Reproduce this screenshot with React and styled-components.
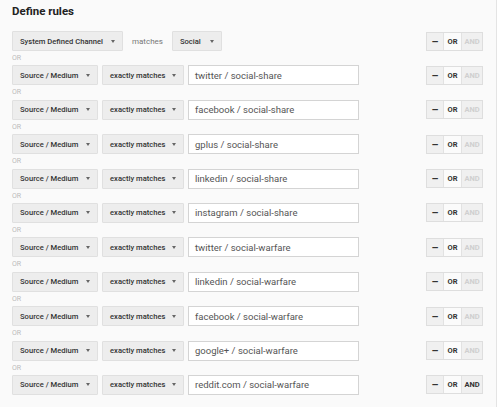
import React from "react";
import styled, { createGlobalStyle } from "styled-components";

const Global = createGlobalStyle`
  html, body { margin: 0; padding: 0; background: #ffffff; }
  body { font-family: Roboto, "Liberation Sans", Arial, sans-serif; }
`;

const Panel = styled.div`
  width: 497px;
  height: 407px;
  box-sizing: border-box;
  background: #fafafa;
  border-right: 1px solid #e4e4e4;
  padding: 4px 12px 0 12px;
`;

const Title = styled.div`
  font-size: 11.5px;
  font-weight: 700;
  color: #222;
  height: 14px;
  line-height: 14px;
  margin-bottom: 13px;
`;

const Row = styled.div`
  display: flex;
  align-items: center;
  height: 20px;
`;

const Select = styled.div`
  box-sizing: border-box;
  width: ${(p) => p.$w}px;
  height: 20px;
  display: flex;
  align-items: center;
  justify-content: space-between;
  padding: 0 7px 0 7px;
  background: #ededed;
  border: 1px solid #e0e0e0;
  border-radius: 1px;
  font-size: 7.6px;
  font-weight: 500;
  color: #333;
  margin-right: ${(p) => p.$mr ?? 4}px;
  white-space: nowrap;
`;

const Caret = styled.span`
  width: 0;
  height: 0;
  border-left: 2.5px solid transparent;
  border-right: 2.5px solid transparent;
  border-top: 3px solid #666;
`;

const Matches = styled.span`
  font-size: 8px;
  color: #777;
  margin-right: 9px;
`;

const Input = styled.div`
  box-sizing: border-box;
  width: 171px;
  height: 20px;
  display: flex;
  align-items: center;
  padding: 0 6px;
  background: #fff;
  border: 1px solid #d4d4d4;
  font-size: 9.5px;
  color: #555;
`;

const Spacer = styled.div`
  flex: 1;
`;

const BtnGroup = styled.div`
  display: flex;
  height: 19px;
  border: 1px solid #dedede;
  box-sizing: border-box;
  background: #f2f2f2;
  margin-right: 1px;
`;

const Btn = styled.div`
  width: ${(p) => p.$w}px;
  display: flex;
  align-items: center;
  justify-content: center;
  font-size: ${(p) => (p.$big ? 11 : 7.5)}px;
  font-weight: 700;
  color: ${(p) => (p.$off ? "#cfcfcf" : "#333")};
  background: ${(p) => (p.$white ? "#fbfbfb" : "#f0f0f0")};
  & + & {
    border-left: 1px solid #e2e2e2;
  }
`;

const OrLabel = styled.div`
  height: 14.4px;
  line-height: 14.4px;
  font-size: 7px;
  color: #bbb;
`;

const Buttons = ({ andOn }) => (
  <BtnGroup>
    <Btn $w={16} $big>
      –
    </Btn>
    <Btn $w={17} $white>
      OR
    </Btn>
    <Btn $w={20} $off={!andOn}>
      AND
    </Btn>
  </BtnGroup>
);

const values = [
  "twitter / social-share",
  "facebook / social-share",
  "gplus / social-share",
  "linkedin / social-share",
  "instagram / social-share",
  "twitter / social-warfare",
  "linkedin / social-warfare",
  "facebook / social-warfare",
  "google+ / social-warfare",
  "reddit.com / social-warfare",
];

export default function App() {
  return (
    <>
      <Global />
      <Panel>
        <Title>Define rules</Title>
        <Row>
          <Select $w={111} $mr={9}>
            System Defined Channel <Caret />
          </Select>
          <Matches>matches</Matches>
          <Select $w={50}>
            Social <Caret />
          </Select>
          <Spacer />
          <Buttons />
        </Row>
        {values.map((v, i) => (
          <React.Fragment key={v}>
            <OrLabel>OR</OrLabel>
            <Row>
              <Select $w={86}>
                Source / Medium <Caret />
              </Select>
              <Select $w={82}>
                exactly matches <Caret />
              </Select>
              <Input>{v}</Input>
              <Spacer />
              <Buttons andOn={i === values.length - 1} />
            </Row>
          </React.Fragment>
        ))}
      </Panel>
    </>
  );
}
